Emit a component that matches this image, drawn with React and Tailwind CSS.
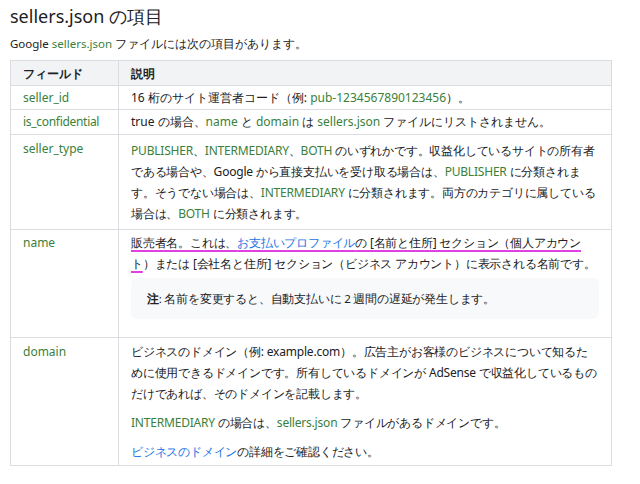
import React from 'react';

const G = ({ children }) => <span className="text-[#3a7f3a]">{children}</span>;
const L = ({ children }) => <span className="text-[#1a73e8]">{children}</span>;

const App = () => {
  return (
    <div className="h-[484px] w-[640px] bg-white px-[10px] pt-[4px] text-[12px] text-[#202124] [font-family:Roboto,'Noto_Sans_CJK_JP',sans-serif]">
      <h2 className="text-[18px] leading-[24px]">sellers.json の項目</h2>
      <p className="mt-[7px] text-[11.5px] leading-[18px]">
        Google <G>sellers.json</G> ファイルには次の項目があります。
      </p>
      <table className="mt-[7px] w-[602px] table-fixed border-collapse border border-[#dadce0] leading-[21px]">
        <thead>
          <tr className="h-[25px] bg-[#f1f3f4]">
            <th className="w-[108px] border border-[#dadce0] px-[12px] py-0 text-left text-[11.5px] font-bold">フィールド</th>
            <th className="border border-[#dadce0] px-[12px] py-0 text-left text-[11.5px] font-bold">説明</th>
          </tr>
        </thead>
        <tbody className="align-top">
          <tr className="h-[24px]">
            <td className="border border-[#dadce0] px-[12px] py-[1px]"><G>seller_id</G></td>
            <td className="border border-[#dadce0] px-[12px] py-[1px]">16 桁のサイト運営者コード（例: <G>pub-1234567890123456</G>）。</td>
          </tr>
          <tr className="h-[25px]">
            <td className="border border-[#dadce0] px-[12px] py-[1px] tracking-[-0.3px]"><G>is_confidential</G></td>
            <td className="border border-[#dadce0] px-[12px] py-[1px]">true の場合、<G>name</G> と <G>domain</G> は <G>sellers.json</G> ファイルにリストされません。</td>
          </tr>
          <tr>
            <td className="border border-[#dadce0] px-[12px] pt-[3px]"><G>seller_type</G></td>
            <td className="h-[95px] border border-[#dadce0] px-[12px] pt-[5px] tracking-[-0.2px]">
              <G>PUBLISHER</G>、<G>INTERMEDIARY</G>、<G>BOTH</G> のいずれかです。収益化しているサイトの所有者である場合や、Google から直接支払いを受け取る場合は、<G>PUBLISHER</G> に分類されます。そうでない場合は、<G>INTERMEDIARY</G> に分類されます。両方のカテゴリに属している場合は、<G>BOTH</G> に分類されます。
            </td>
          </tr>
          <tr>
            <td className="border border-[#dadce0] px-[12px] pt-[2px]"><G>name</G></td>
            <td className="h-[108px] border border-[#dadce0] px-[12px] pt-[2px] tracking-[-0.2px]">
              <span className="underline decoration-[#e040e0] decoration-2 underline-offset-[3px]">販売者名。これは、<L>お支払いプロファイル</L>の [名前と住所] セクション（個人アカウント</span>）または [会社名と住所] セクション（ビジネス アカウント）に表示される名前です。
              <div className="mt-[4px] mb-[14px] rounded-[6px] bg-[#f8f9fa] px-[16px] py-[10px] text-[11.5px]">
                <b>注</b>: 名前を変更すると、自動支払いに 2 週間の遅延が発生します。
              </div>
            </td>
          </tr>
          <tr>
            <td className="border border-[#dadce0] px-[12px] pt-[3px]"><G>domain</G></td>
            <td className="h-[128px] border border-[#dadce0] px-[12px] pt-[3px] tracking-[-0.2px]">
              <p>ビジネスのドメイン（例: example.com）。広告主がお客様のビジネスについて知るために使用できるドメインです。所有しているドメインが AdSense で収益化しているものだけであれば、そのドメインを記載します。</p>
              <p className="mt-[8px]"><G>INTERMEDIARY</G> の場合は、<G>sellers.json</G> ファイルがあるドメインです。</p>
              <p className="mt-[8px]"><L>ビジネスのドメイン</L>の詳細をご確認ください。</p>
            </td>
          </tr>
        </tbody>
      </table>
    </div>
  );
};

export default App;
